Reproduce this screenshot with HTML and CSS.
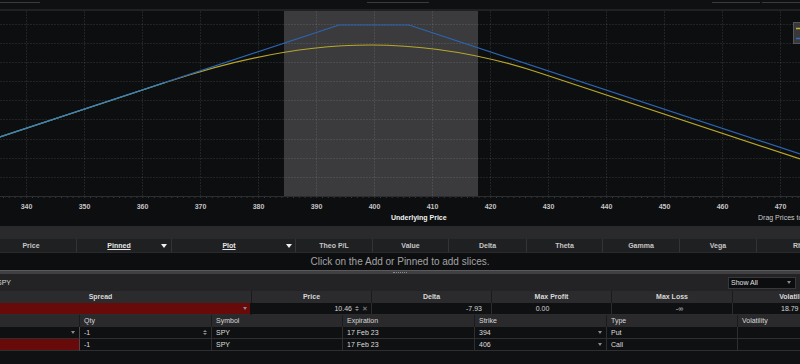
FILE: index.html
```html
<!DOCTYPE html>
<html>
<head>
<meta charset="utf-8">
<title>Analyze</title>
<link rel="stylesheet" href="styles.css">
</head>
<body>
<div class="app">
  <div class="toolbar">
    <span class="tb tb1"></span><span class="tb tb2"></span><span class="tb tb3"></span><span class="tb tb4"></span>
  </div>

  <svg class="chart" width="800" height="217" viewBox="0 9 800 217" xmlns="http://www.w3.org/2000/svg">
    <rect x="0" y="9" width="800" height="217" fill="#0d0e10"/>
    <rect x="0" y="9" width="800" height="2" fill="#202124"/>
    <rect x="284" y="11" width="194" height="185" fill="#3b3b3d"/>
    <g class="grid-h">
      <line x1="0" y1="24.5" x2="800" y2="24.5"/>
      <line x1="0" y1="43.5" x2="800" y2="43.5"/>
      <line x1="0" y1="62.5" x2="800" y2="62.5"/>
      <line x1="0" y1="81.5" x2="800" y2="81.5"/>
      <line x1="0" y1="100.5" x2="800" y2="100.5"/>
      <line x1="0" y1="119.5" x2="800" y2="119.5"/>
      <line x1="0" y1="139.5" x2="800" y2="139.5"/>
      <line x1="0" y1="158.5" x2="800" y2="158.5"/>
      <line x1="0" y1="177.5" x2="800" y2="177.5"/>
    </g>
    <g class="grid-v">
      <line x1="26.5" y1="11" x2="26.5" y2="196"/>
      <line x1="84.5" y1="11" x2="84.5" y2="196"/>
      <line x1="142.5" y1="11" x2="142.5" y2="196"/>
      <line x1="200.5" y1="11" x2="200.5" y2="196"/>
      <line x1="258.5" y1="11" x2="258.5" y2="196"/>
      <line x1="316.5" y1="11" x2="316.5" y2="196"/>
      <line x1="374.5" y1="11" x2="374.5" y2="196"/>
      <line x1="432.5" y1="11" x2="432.5" y2="196"/>
      <line x1="490.5" y1="11" x2="490.5" y2="196"/>
      <line x1="548.5" y1="11" x2="548.5" y2="196"/>
      <line x1="606.5" y1="11" x2="606.5" y2="196"/>
      <line x1="664.5" y1="11" x2="664.5" y2="196"/>
      <line x1="722.5" y1="11" x2="722.5" y2="196"/>
      <line x1="780.5" y1="11" x2="780.5" y2="196"/>
    </g>
    <line class="axis" x1="0" y1="196.5" x2="800" y2="196.5"/>
    <line class="axis-ticks" x1="3" y1="197.5" x2="800" y2="197.5"/>

    <path class="curve-yellow" d="M0,137 L170,81 Q279,45 370,45 Q455,45 540,73 L800,159"/>
    <path class="curve-blue" d="M0,137 L339,25 L409,25 L800,154"/>
    <path class="curve-overlap" d="M0,137 L165,82.5"/>

    <rect x="793.5" y="22.5" width="9" height="21" fill="#38383b" stroke="#555559"/>
    <line x1="796" y1="28.5" x2="800" y2="28.5" stroke="#c4b230" stroke-width="1.5"/>
    <line x1="796" y1="38.5" x2="800" y2="38.5" stroke="#2f6fc0" stroke-width="1.5"/>

    <g class="ax">
      <text x="26.5" y="209">340</text>
      <text x="84.5" y="209">350</text>
      <text x="142.5" y="209">360</text>
      <text x="200.5" y="209">370</text>
      <text x="258.5" y="209">380</text>
      <text x="316.5" y="209">390</text>
      <text x="374.5" y="209">400</text>
      <text x="432.5" y="209">410</text>
      <text x="490.5" y="209">420</text>
      <text x="548.5" y="209">430</text>
      <text x="606.5" y="209">440</text>
      <text x="664.5" y="209">450</text>
      <text x="722.5" y="209">460</text>
      <text x="780.5" y="209">470</text>
    </g>
    <text class="ax-title" x="391" y="220">Underlying Price</text>
    <text class="ax-note" x="758" y="220">Drag Prices to zoom</text>
  </svg>

  <div class="band"></div>

  <div class="slices-head">
    <div class="sh sh-price">Price</div>
    <div class="sh dd"><span class="lbl"><u>Pinned</u></span><span class="tri"></span></div>
    <div class="sh dd dd-plot"><span class="lbl"><u>Plot</u></span><span class="tri"></span></div>
    <div class="sh">Theo P/L</div>
    <div class="sh">Value</div>
    <div class="sh">Delta</div>
    <div class="sh">Theta</div>
    <div class="sh">Gamma</div>
    <div class="sh">Vega</div>
    <div class="sh sh-rho">Rho</div>
  </div>

  <div class="message">Click on the Add or Pinned to add slices.</div>

  <div class="splitter"><span class="grip"></span></div>

  <div class="spread-bar">
    <span class="sym">SPY</span>
    <div class="select"><span>Show All</span><span class="caret"></span></div>
  </div>

  <div class="tbl spread-tbl">
    <div class="hd hd-spread">Spread</div>
    <div class="hd">Price</div>
    <div class="hd">Delta</div>
    <div class="hd">Max Profit</div>
    <div class="hd">Max Loss</div>
    <div class="hd">Volatility</div>

    <div class="cell red-cell"><span class="caret"></span></div>
    <div class="cell num price-cell"><span>10.46</span><span class="spin"><i class="up"></i><i class="down"></i></span><span class="x">✕</span></div>
    <div class="cell num delta-cell">-7.93</div>
    <div class="cell mp-cell">0.00</div>
    <div class="cell ml-cell">-∞</div>
    <div class="cell vol-cell">18.79</div>
  </div>

  <div class="tbl legs-tbl">
    <div class="lh"></div>
    <div class="lh">Qty</div>
    <div class="lh">Symbol</div>
    <div class="lh">Expiration</div>
    <div class="lh">Strike</div>
    <div class="lh">Type</div>
    <div class="lh">Volatility</div>

    <div class="lc lc-first"><span></span><span class="caret"></span></div>
    <div class="lc lc-flex"><span>-1</span><span class="spin"><i class="up"></i><i class="down"></i></span></div>
    <div class="lc">SPY</div>
    <div class="lc">17 Feb 23</div>
    <div class="lc lc-flex"><span>394</span><span class="caret"></span></div>
    <div class="lc">Put</div>
    <div class="lc"></div>

    <div class="lc lc-red"></div>
    <div class="lc">-1</div>
    <div class="lc">SPY</div>
    <div class="lc">17 Feb 23</div>
    <div class="lc lc-flex"><span>406</span><span class="caret"></span></div>
    <div class="lc">Call</div>
    <div class="lc"></div>
  </div>

  <div class="filler"></div>
</div>
</body>
</html>
```

FILE: styles.css
```css
* { box-sizing: border-box; margin: 0; padding: 0; }
html, body { background: #0e0f11; }
body {
  width: 800px;
  height: 364px;
  overflow: hidden;
  font-family: "Liberation Sans", Arial, sans-serif;
  font-size: 7px;
  color: #d6d6d6;
}
.app {
  display: flex;
  flex-direction: column;
  width: 800px;
  height: 364px;
  overflow: hidden;
}

/* top toolbar remnants */
.toolbar {
  flex: none;
  height: 9px;
  background: #0f1012;
  display: flex;
  align-items: flex-start;
  padding-top: 2px;
}
.tb { height: 1px; background: #3b3b3e; }
.tb1 { width: 40px; }
.tb2 { margin-left: 327px; width: 62px; }
.tb3 { margin-left: 283px; width: 48px; }
.tb4 { margin-left: 2px; width: 38px; }

/* chart */
.chart { display: block; flex: none; }
.grid-h line, .grid-v line {
  stroke: rgba(255, 255, 255, 0.09);
  stroke-width: 1;
  stroke-dasharray: 2 1;
}
.axis { stroke: #2c2d30; stroke-width: 1; }
.axis-ticks { stroke: #3a3b3f; stroke-width: 1; stroke-dasharray: 1 4.8; }
.curve-yellow { fill: none; stroke: #b9a72a; stroke-width: 1.2; }
.curve-blue { fill: none; stroke: #2c65b0; stroke-width: 1.2; }
.curve-overlap { fill: none; stroke: #3f87ae; stroke-width: 1.3; }
.ax text {
  font-family: "Liberation Sans", Arial, sans-serif;
  font-size: 7px;
  font-weight: bold;
  fill: #c4c4c4;
  text-anchor: middle;
}
.ax-title {
  font-family: "Liberation Sans", Arial, sans-serif;
  font-size: 7px;
  font-weight: bold;
  fill: #f2f2f2;
}
.ax-note {
  font-family: "Liberation Sans", Arial, sans-serif;
  font-size: 7px;
  fill: #c8c8c8;
}

.band { flex: none; height: 13px; background: #2a2a2c; }

/* slices header */
.slices-head {
  flex: none;
  display: grid;
  grid-template-columns: 77px 95px 124px 77px 76px 78px 76px 77px 77px 60px;
  height: 14px;
  background: #1f2022;
  border-bottom: 1px solid #2a2a2d;
}
.sh {
  border-right: 1px solid #333438;
  text-align: center;
  line-height: 13px;
  font-weight: bold;
  color: #c6c6c6;
  white-space: nowrap;
  overflow: hidden;
}
.sh-price { padding-right: 14px; }
.sh-rho { text-align: left; padding-left: 36px; }
.dd {
  display: flex;
  align-items: center;
  padding-right: 4px;
}
.dd-plot { padding-right: 3px; }
.dd .lbl { flex: 1; text-align: center; color: #e6e6e6; }
.dd u { text-decoration-thickness: 1px; text-underline-offset: 1px; }
.tri {
  width: 0;
  height: 0;
  border-left: 3px solid transparent;
  border-right: 3px solid transparent;
  border-top: 4px solid #f0f0f0;
}

.message {
  flex: none;
  height: 17px;
  line-height: 17px;
  text-align: center;
  font-size: 10px;
  color: #a3a3a3;
  background: #0d0e10;
}

.splitter {
  flex: none;
  height: 4px;
  background: #404043;
  border-top: 1px solid #5a5a5d;
  display: flex;
  justify-content: center;
  align-items: center;
}
.grip {
  width: 14px;
  height: 1px;
  border-top: 1px dotted #8a8a8d;
}

.spread-bar {
  flex: none;
  height: 17px;
  background: #232325;
  display: flex;
  align-items: center;
  justify-content: space-between;
  padding-right: 4px;
}
.sym { margin-left: -3px; color: #d8d8d8; }
.select {
  width: 68px;
  height: 12px;
  background: #0c0d0f;
  border: 1px solid #38383b;
  display: flex;
  align-items: center;
  justify-content: space-between;
  padding: 0 4px 0 2px;
  color: #e0e0e0;
}
.caret {
  width: 0;
  height: 0;
  border-left: 2.5px solid transparent;
  border-right: 2.5px solid transparent;
  border-top: 3px solid #8a8a8a;
}

/* spread table */
.tbl { flex: none; display: grid; width: 880px; }
.spread-tbl {
  grid-template-columns: 252px 120px 120px 120px 121px 122px;
  grid-auto-rows: 12px;
}
.hd {
  background: #2b2b2d;
  border-right: 1px solid #1b1b1d;
  text-align: center;
  font-weight: bold;
  line-height: 12px;
  color: #d8d8d8;
  white-space: nowrap;
}
.hd-spread { padding-right: 50px; }
.cell {
  background: #0f1012;
  border-right: 1px solid #2c2c2f;
  border-bottom: 1px solid #2c2c2f;
  line-height: 11px;
  white-space: nowrap;
}
.red-cell {
  background: #690a0a;
  border-right: 2px solid #0f1012;
  display: flex;
  justify-content: flex-end;
  align-items: center;
  padding-right: 3px;
}
.price-cell {
  display: flex;
  justify-content: flex-end;
  align-items: center;
  gap: 3px;
  padding-right: 3px;
}
.spin {
  display: flex;
  flex-direction: column;
  gap: 1px;
}
.spin i {
  display: block;
  width: 0;
  height: 0;
  border-left: 2px solid transparent;
  border-right: 2px solid transparent;
}
.spin .up { border-bottom: 2.5px solid #8a8a8a; }
.spin .down { border-top: 2.5px solid #8a8a8a; }
.x { color: #8c8c8c; font-size: 7px; }
.delta-cell { text-align: right; padding-right: 9px; }
.mp-cell { text-align: center; padding-right: 18px; }
.ml-cell { text-align: center; padding-left: 15px; }
.vol-cell { padding-left: 48px; }

/* legs table */
.legs-tbl {
  grid-template-columns: 80px 132px 131px 132px 132px 131px 142px;
  grid-auto-rows: 12px;
}
.lh {
  background: #2a2a2c;
  border-right: 1px solid #1b1b1d;
  padding-left: 4px;
  line-height: 12px;
  color: #d8d8d8;
  white-space: nowrap;
}
.lc {
  background: #0f1012;
  border-right: 1px solid #2f2f32;
  border-bottom: 1px solid #2f2f32;
  padding-left: 4px;
  line-height: 11px;
  color: #dedede;
  white-space: nowrap;
}
.lc-flex, .lc-first {
  display: flex;
  justify-content: space-between;
  align-items: center;
  padding-right: 4px;
}
.lc-first { border-right: 1px solid #4a4a4d; }
.lc-red { background: #690a0a; border-right: 1px solid #4a4a4d; }

.filler { flex: 1; background: #101113; }
```
